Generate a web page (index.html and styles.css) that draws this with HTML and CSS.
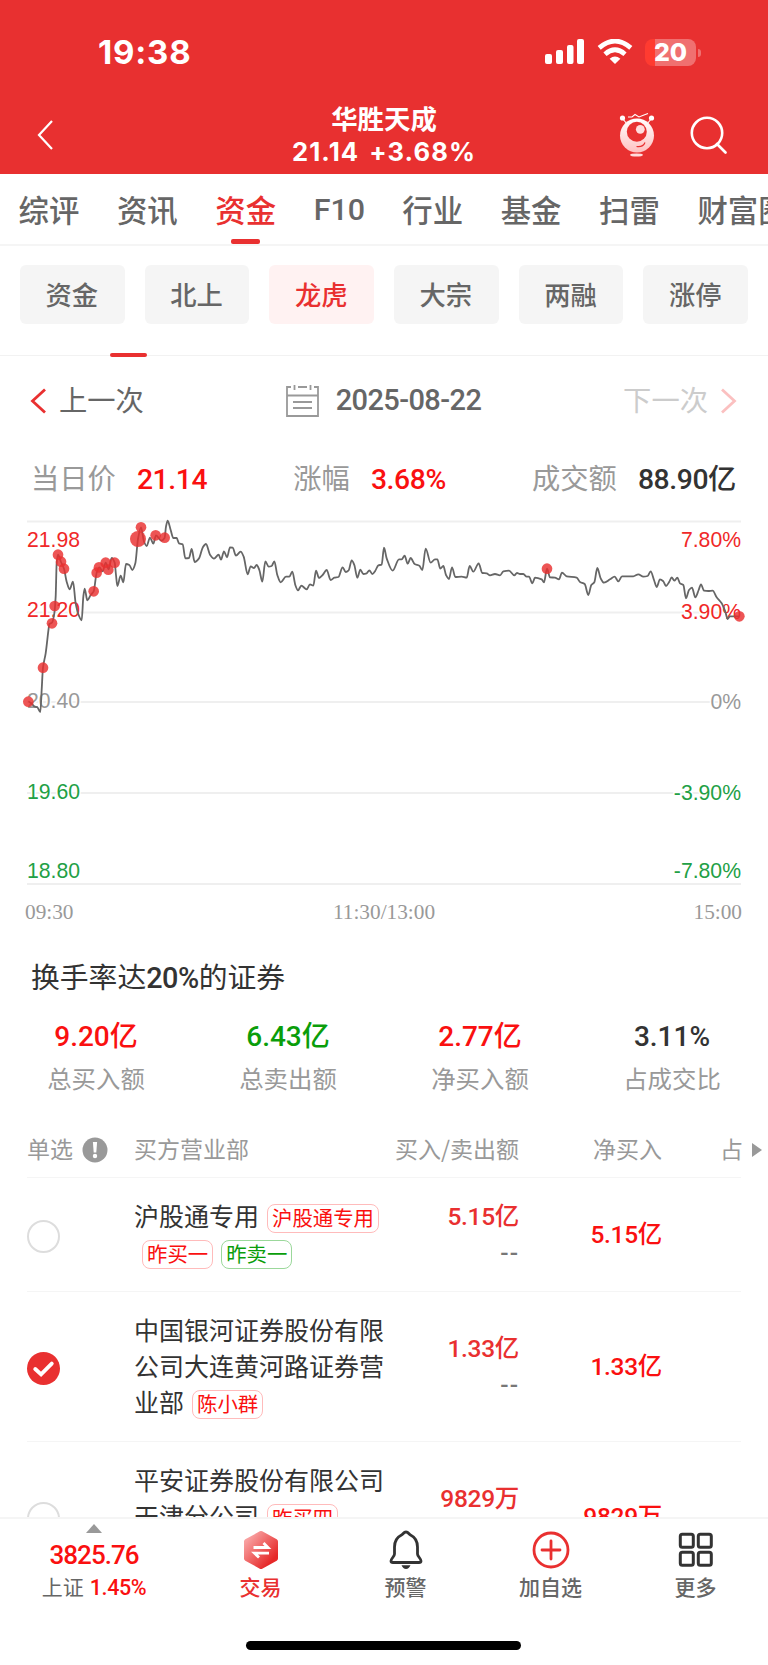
FILE: index.html
```html
<!DOCTYPE html>
<html lang="zh-CN">
<head>
    <meta charset="UTF-8">
    <meta name="viewport" content="width=device-width, initial-scale=1.0">
    <title>华胜天成 - 龙虎榜</title>
    <link rel="stylesheet" href="styles.css">
</head>

<body>
    <div class="app">
        <header>
            <div class="status-bar">
                <span class="time">19:38</span>
                <div class="status-icons">
                    <svg width="40" height="26" viewBox="0 0 40 26" fill="#fff">
                        <rect x="0" y="15" width="7" height="10" rx="2"/>
                        <rect x="11" y="11" width="7" height="14" rx="2"/>
                        <rect x="22" y="6" width="6.5" height="19" rx="2"/>
                        <rect x="32" y="0" width="7" height="25" rx="2"/>
                    </svg>
                    <svg class="wifi" width="36" height="26" viewBox="0 0 36 26" fill="none" stroke="#fff" stroke-width="4.8">
                        <path d="M2.2 8.8 Q18 -4.6 33.8 8.8"/>
                        <path d="M8 15.2 Q18 6.4 28 15.2"/>
                        <path d="M12.6 19.8 Q18 15.4 23.4 19.8 L18 25 Z" fill="#fff" stroke="none"/>
                    </svg>
                    <div class="battery"><span>20</span></div>
                </div>
            </div>
            <div class="nav-bar">
                <svg class="back" width="18" height="32" viewBox="0 0 18 32" fill="none" stroke="#fff" stroke-width="2.2">
                    <path d="M16 2 L3 16 L16 30"/>
                </svg>
                <div class="stock">
                    <h1>华胜天成</h1>
                    <p>21.14<span>+3.68%</span></p>
                </div>
                <div class="nav-icons">
                    <svg width="36" height="46" viewBox="0 0 36 46">
                        <defs>
                            <linearGradient id="robot" x1="0" y1="0" x2="0" y2="1">
                                <stop offset="0" stop-color="#fff"/>
                                <stop offset="1" stop-color="#ffc0c0"/>
                            </linearGradient>
                        </defs>
                        <g fill="none" stroke="#fff" stroke-width="1.1">
                            <path d="M3.5 6.5 L8 12 M32.5 6.5 L28 12"/>
                            <path d="M9 5 L13 5 L16 2.5 L20 5 L25 3 L29 1.5"/>
                        </g>
                        <circle cx="3.5" cy="6" r="2.6" fill="#fff"/>
                        <circle cx="32.5" cy="6" r="2.6" fill="#fff"/>
                        <circle cx="18" cy="23.5" r="17" fill="url(#robot)"/>
                        <circle cx="17.8" cy="19.8" r="10" fill="#e83030"/>
                        <circle cx="21.3" cy="17.3" r="4.4" fill="#ffdcdc"/>
                        <path d="M17.5 34.5 Q24 35.5 26 30.5" fill="none" stroke="#e83030" stroke-width="1.2"/>
                        <ellipse cx="17.5" cy="43" rx="6.5" ry="1.6" fill="#ffdcdc"/>
                    </svg>
                    <svg class="search" width="38" height="38" viewBox="0 0 38 38" fill="none" stroke="#fff" stroke-width="2.6">
                        <circle cx="17" cy="17" r="15.2"/>
                        <path d="M27 28 L35.5 36.5" stroke-linecap="round"/>
                    </svg>
                </div>
            </div>
        </header>

        <nav class="tabs">
            <a>综评</a>
            <a>资讯</a>
            <a class="active">资金</a>
            <a class="f10">F10</a>
            <a>行业</a>
            <a>基金</a>
            <a>扫雷</a>
            <a>财富圈</a>
        </nav>

        <div class="sub-tabs">
            <button>资金</button>
            <button>北上</button>
            <button class="active">龙虎</button>
            <button>大宗</button>
            <button>两融</button>
            <button>涨停</button>
        </div>

        <div class="date-row">
            <div class="prev">
                <svg width="17" height="26" viewBox="0 0 17 26" fill="none" stroke="#e93030" stroke-width="2.8"><path d="M15 1.5 L2.5 13 L15 24.5"/></svg>
                <span>上一次</span>
            </div>
            <div class="date">
                <svg width="33" height="32" viewBox="0 0 33 32" fill="none" stroke="#999" stroke-width="1.8">
                    <path d="M5 2 H1 V31 H32 V2 H28 M12 2 H21 M1 10.5 H32"/>
                    <path d="M8.5 0 V5 M24.5 0 V5"/>
                    <path d="M7 17 H26 M7 23 H26"/>
                </svg>
                <span class="num">2025-08-22</span>
            </div>
            <div class="next">
                <span>下一次</span>
                <svg width="17" height="26" viewBox="0 0 17 26" fill="none" stroke="#fbc0c0" stroke-width="2.8"><path d="M2 1.5 L14.5 13 L2 24.5"/></svg>
            </div>
        </div>

        <div class="quote-row">
            <div>当日价<b class="num red">21.14</b></div>
            <div>涨幅<b class="num red">3.68%</b></div>
            <div>成交额<b class="num">88.90亿</b></div>
        </div>

        <!-- Intraday chart -->
        <svg class="chart" width="768" height="430" viewBox="0 500 768 430">
            <g stroke="#efefef" stroke-width="2">
                <path d="M27 521.5 H741"/>
                <path d="M27 612.5 H741"/>
                <path d="M27 702 H741"/>
                <path d="M27 793 H741"/>
                <path d="M27 884 H741"/>
            </g>
            <g class="labels">
                <text class="up" x="27" y="546.5">21.98</text>
                <text class="up" x="27" y="617">21.20</text>
                <text x="27" y="708">20.40</text>
                <text class="down" x="27" y="799">19.60</text>
                <text class="down" x="27" y="877.5">18.80</text>
            </g>
            <g class="labels right">
                <text class="up" x="741" y="546.5">7.80%</text>
                <text class="up" x="741" y="618.5">3.90%</text>
                <text x="741" y="709">0%</text>
                <text class="down" x="741" y="799.5">-3.90%</text>
                <text class="down" x="741" y="877.5">-7.80%</text>
            </g>
            <g class="axis">
                <text x="25" y="919">09:30</text>
                <text x="384" y="919" text-anchor="middle">11:30/13:00</text>
                <text x="742" y="919" text-anchor="end">15:00</text>
            </g>
            <g transform="translate(0 500) scale(.33333)">
                <path id="line" fill="none" stroke="#666" stroke-width="5.4" stroke-linejoin="round"/>
                <g id="dots" fill="#e93030" fill-opacity=".82"></g>
            </g>
        </svg>

        <h2>换手率达<b class="num">20%</b>的证券</h2>

        <div class="stats">
            <div><b class="num red">9.20亿</b><span>总买入额</span></div>
            <div><b class="num green">6.43亿</b><span>总卖出额</span></div>
            <div><b class="num red">2.77亿</b><span>净买入额</span></div>
            <div><b class="num">3.11%</b><span>占成交比</span></div>
        </div>

        <div class="table">
            <div class="row head">
                <div class="pick">单选
                    <svg width="26" height="26" viewBox="0 0 26 26">
                        <circle cx="13" cy="13" r="12.5" fill="#999"/>
                        <path d="M10.9 5 H15.1 L14.3 15.5 H11.7 Z" fill="#fff"/>
                        <circle cx="13" cy="19" r="2.2" fill="#fff"/>
                    </svg>
                </div>
                <div>买方营业部</div>
                <div class="amount">买入/卖出额</div>
                <div class="net">净买入</div>
                <div class="ratio">占</div>
                <span class="more"></span>
            </div>
            <div class="row">
                <div class="pick"><i class="radio"></i></div>
                <div class="name">沪股通专用<span class="tag">沪股通专用</span> <span class="tag">昨买一</span><span class="tag green">昨卖一</span></div>
                <div class="amount num">5.15亿<span>--</span></div>
                <div class="net num">5.15亿</div>
            </div>
            <div class="row">
                <div class="pick">
                    <svg width="33" height="33" viewBox="0 0 34 34">
                        <circle cx="17" cy="17" r="17" fill="#e93030"/>
                        <path d="M8.5 17.5 L14.5 23 L25.5 12" fill="none" stroke="#fff" stroke-width="4" stroke-linecap="round"/>
                    </svg>
                </div>
                <div class="name">中国银河证券股份有限公司大连黄河路证券营业部<span class="tag">陈小群</span></div>
                <div class="amount num">1.33亿<span>--</span></div>
                <div class="net num">1.33亿</div>
            </div>
            <div class="row tall">
                <div class="pick"><i class="radio"></i></div>
                <div class="name">平安证券股份有限公司天津分公司<span class="tag">昨买四</span></div>
                <div class="amount num">9829万<span>--</span></div>
                <div class="net num">9829万</div>
            </div>
        </div>

        <footer>
            <div class="index">
                <i class="arrow"></i>
                <b class="num red">3825.76</b>
                <span>上证<b class="num red">1.45%</b></span>
            </div>
            <div class="item active">
                <svg width="40" height="40" viewBox="0 0 40 40">
                    <defs>
                        <linearGradient id="trade" x1="0" y1="0" x2="1" y2="1">
                            <stop offset="0.1" stop-color="#f8a0a0"/>
                            <stop offset="0.85" stop-color="#e62828"/>
                        </linearGradient>
                    </defs>
                    <path d="M20 3.5 L34.5 11.5 V28.5 L20 36.5 L5.5 28.5 V11.5 Z" fill="url(#trade)" stroke="url(#trade)" stroke-width="5" stroke-linejoin="round"/>
                    <path d="M12.5 17.5 H27 L22.5 13 M28 23.2 H13.5 L18 27.5" fill="none" stroke="#fff" stroke-width="2.8"/>
                </svg>
                <span>交易</span>
            </div>
            <div class="item">
                <svg width="40" height="40" viewBox="0 0 40 40" fill="none" stroke="#333" stroke-width="2.8" stroke-linejoin="round">
                    <path d="M20 2 C17.5 2 17.5 4 15.5 5 C10.5 7.5 8.5 11.5 8.5 17 V24 C8.5 26.5 5 28.5 5 31 Q5 32.5 7 32.5 H33 Q35 32.5 35 31 C35 28.5 31.5 26.5 31.5 24 V17 C31.5 11.5 29.5 7.5 24.5 5 C22.5 4 22.5 2 20 2 Z"/>
                    <path d="M15.5 35.3 H24.5 Q23 39 20 39 T15.5 35.3 Z" fill="#333" stroke="none"/>
                </svg>
                <span>预警</span>
            </div>
            <div class="item">
                <svg width="40" height="40" viewBox="0 0 40 40" fill="none" stroke="#e93030" stroke-width="2.8" stroke-linecap="round">
                    <circle cx="20" cy="20" r="17"/>
                    <path d="M20 11 V29 M11 20 H29"/>
                </svg>
                <span>加自选</span>
            </div>
            <div class="item">
                <svg width="40" height="40" viewBox="0 0 40 40" fill="none" stroke="#333" stroke-width="3">
                    <rect x="4.3" y="4.3" width="13" height="13" rx="2"/>
                    <rect x="22.3" y="4.3" width="13" height="13" rx="2"/>
                    <rect x="4.3" y="22.3" width="13" height="13" rx="2"/>
                    <rect x="22.3" y="22.3" width="13" height="13" rx="2"/>
                </svg>
                <span>更多</span>
            </div>
            <div class="home-bar"></div>
        </footer>
    </div>

    <script>
        // x,y pairs in thirds of a pixel
        const points = [
            85,605, 96,612, 103,619, 112,622, 121,636, 125,570, 129,503, 137,460, 146,385, 148,372, 156,368,
            163,340, 167,290, 170,190, 174,164, 183,186, 192,206, 200,245, 209,268, 219,245, 227,310, 236,345,
            245,361, 250,290, 254,266, 262,301, 272,285, 281,274, 290,218, 298,202, 308,214, 317,188, 326,208,
            335,174, 344,188, 348,225, 352,258, 362,227, 370,247, 378,192, 388,195, 397,210, 406,190, 414,117,
            423,82, 432,125, 440,138, 450,113, 460,131, 468,106, 484,122, 494,113, 498,80, 503,62, 512,90,
            520,114, 530,114, 537,130, 548,133, 556,175, 567,174, 575,147, 584,186, 597,175, 608,143, 618,132,
            630,164, 642,176, 656,164, 663,179, 672,154, 681,172, 690,142, 698,143, 708,167, 722,155, 731,170,
            743,223, 752,199, 762,204, 770,195, 778,210, 787,245, 796,184, 806,200, 815,198, 823,184, 832,225,
            842,247, 858,230, 868,230, 877,215, 886,255, 894,271, 904,257, 920,268, 930,253, 940,257, 948,212,
            957,234, 968,225, 980,210, 992,240, 1003,233, 1015,231, 1028,202, 1037,216, 1046,211, 1055,181,
            1063,195, 1072,233, 1081,209, 1090,222, 1100,220, 1108,211, 1117,222, 1126,212, 1135,196, 1145,194,
            1152,143, 1160,175, 1178,212, 1197,178, 1205,178, 1214,167, 1223,191, 1232,174, 1244,192, 1258,197,
            1267,210, 1277,146, 1292,188, 1305,178, 1312,178, 1321,206, 1330,198, 1338,225, 1347,237, 1356,202,
            1366,231, 1385,230, 1400,233, 1409,198, 1420,215, 1436,190, 1447,219, 1460,220, 1470,226, 1485,222,
            1500,226, 1510,214, 1527,212, 1543,226, 1551,219, 1560,222, 1570,222, 1580,230, 1587,230, 1597,250,
            1605,233, 1625,238, 1632,247, 1641,206, 1650,232, 1665,233, 1677,238, 1686,218, 1700,229, 1730,233,
            1740,246, 1754,252, 1765,285, 1774,255, 1783,247, 1792,204, 1802,235, 1812,248, 1830,238, 1844,230,
            1855,244, 1866,229, 1900,229, 1915,223, 1930,230, 1943,228, 1952,214, 1962,240, 1970,261, 1980,238,
            1990,244, 1998,258, 2008,245, 2015,232, 2023,242, 2032,233, 2040,250, 2050,255, 2058,295, 2067,270,
            2076,263, 2086,292, 2096,270, 2103,253, 2112,272, 2125,273, 2138,272, 2150,292, 2165,310, 2176,335,
            2183,357, 2190,349, 2218,349
        ];

        const dots = [
            [85, 605], [129, 503], [156, 370], [164, 318], [174, 164], [183, 185], [192, 206], [281, 274],
            [290, 218], [297, 202], [317, 188], [325, 209], [344, 188], [414, 117, 24], [423, 82], [467, 106],
            [494, 113], [1641, 206], [2218, 349]
        ];

        const pts = [];
        for (let i = 0; i < points.length; i += 2) {
            pts.push([points[i], points[i + 1]]);
        }

        // flat tangent on every peak and dip, so the curve never overshoots
        function slope(i) {
            if (i === 0 || i === pts.length - 1) return 0;
            const a = (pts[i][1] - pts[i - 1][1]) / (pts[i][0] - pts[i - 1][0]);
            const b = (pts[i + 1][1] - pts[i][1]) / (pts[i + 1][0] - pts[i][0]);
            return a * b <= 0 ? 0 : 2 * a * b / (a + b);
        }

        let d = `M${pts[0]}`;
        for (let i = 1; i < pts.length; i++) {
            const [x0, y0] = pts[i - 1];
            const [x1, y1] = pts[i];
            const dx = (x1 - x0) / 3;
            d += `C${x0 + dx},${y0 + slope(i - 1) * dx} ${x1 - dx},${y1 - slope(i) * dx} ${x1},${y1}`;
        }
        document.getElementById('line').setAttribute('d', d);
        document.getElementById('dots').innerHTML = dots
            .map(([x, y, r]) => `<circle cx="${x}" cy="${y}" r="${r || 16}"/>`)
            .join('');
    </script>
</body>
</html>
```

FILE: styles.css
```css
* {
    box-sizing: border-box;
}

body, html {
    margin: 0;
    padding: 0;
    font-family: "Noto Sans CJK SC", sans-serif;
    background-color: #fff;
    color: #333;
}

h1, h2, p {
    margin: 0;
}

svg {
    display: block;
    flex-shrink: 0;
}

.app {
    width: 768px;
    height: 1665px;
    display: flex;
    flex-direction: column;
    overflow: hidden;
}

.num {
    font-family: Roboto, "Noto Sans CJK SC", sans-serif;
    font-weight: 500;
}

.red {
    color: #fa1010;
}

.green {
    color: #0a9d0a;
}

header {
    height: 174px;
    flex-shrink: 0;
    background-color: #e83030;
    color: #fff;
}

.status-bar {
    height: 104px;
    padding: 0 67px 0 98px;
    display: flex;
    justify-content: space-between;
    align-items: center;
}

.time {
    font-family: Inter, sans-serif;
    font-weight: 700;
    font-size: 33px;
    letter-spacing: 0.8px;
}

.status-icons {
    display: flex;
    align-items: center;
}

.wifi {
    margin: 0 12px;
}

.battery {
    position: relative;
    width: 51px;
    height: 27px;
    margin-right: 5px;
    border-radius: 8px;
    background: linear-gradient(to right, #ff3b30 10px, #f07070 10px);
    font: 800 25px/27px Inter, sans-serif;
    text-align: center;
}

.battery::after {
    content: "";
    position: absolute;
    left: 53px;
    top: 10px;
    width: 3px;
    height: 8px;
    border-radius: 0 4px 4px 0;
    background-color: #f07070;
}

.nav-bar {
    height: 70px;
    display: grid;
    grid-template-columns: 150px 1fr 150px;
}

.back {
    margin: 15px 0 0 36px;
}

.stock {
    text-align: center;
}

.stock h1 {
    margin-top: -2px;
    font-size: 26.4px;
    line-height: 32px;
    font-weight: 700;
}

.stock p {
    margin-top: 2px;
    font: 700 25.6px/32px Inter, sans-serif;
    letter-spacing: 1.1px;
}

.stock p span {
    margin-left: 10px;
}

.nav-icons {
    display: flex;
    align-items: flex-start;
    gap: 35px;
    padding: 8px 0 0 1px;
}

.search {
    margin-top: 4px;
}

.tabs {
    height: 72px;
    flex-shrink: 0;
    display: flex;
    gap: 37.6px;
    padding-left: 18.5px;
    border-bottom: 2px solid #f5f5f5;
    font-size: 30.4px;
    line-height: 71px;
    font-weight: 500;
    color: #666;
    white-space: nowrap;
    overflow: hidden;
}

.tabs .f10 {
    width: 51px;
    font-family: Roboto, sans-serif;
    line-height: 72px;
}

.tabs .active {
    position: relative;
    color: #e93030;
}

.tabs .active::after {
    content: "";
    position: absolute;
    left: 16px;
    bottom: 0;
    width: 29px;
    height: 5px;
    border-radius: 2px;
    background-color: #e93030;
}

.sub-tabs {
    position: relative;
    height: 110px;
    flex-shrink: 0;
    display: flex;
    gap: 20px;
    padding: 19px 20px 0;
    border-bottom: 1px solid #f2f2f2;
}

.sub-tabs::after {
    content: "";
    position: absolute;
    left: 110px;
    bottom: -2px;
    width: 37px;
    height: 4px;
    border-radius: 2px;
    background-color: #e93030;
}

.sub-tabs button {
    flex: 1;
    height: 59px;
    padding: 0 1px 2px 0;
    border: none;
    border-radius: 6px;
    background-color: #f5f5f5;
    font: 500 26.3px/57px "Noto Sans CJK SC", sans-serif;
    color: #666;
}

.sub-tabs .active {
    background-color: #fff2f2;
    color: #e93030;
}

.date-row {
    height: 89px;
    flex-shrink: 0;
    display: flex;
    justify-content: space-between;
    align-items: center;
    padding: 0 31px 0 30px;
    font-size: 28.3px;
    color: #666;
}

.date-row span {
    margin-top: -5px;
}

.prev, .date, .next {
    display: flex;
    align-items: center;
    gap: 12px;
}

.date {
    gap: 17px;
}

.date .num {
    margin-top: -1px;
    font-size: 29px;
    letter-spacing: -0.6px;
}

.next {
    color: #ccc;
}

.quote-row {
    height: 69px;
    flex-shrink: 0;
    display: flex;
    justify-content: space-between;
    padding: 0 32px 0 31px;
    font-size: 28.3px;
    line-height: 64px;
    color: #999;
}

.quote-row .num {
    margin-left: 21px;
    letter-spacing: -0.4px;
    color: #333;
}

.quote-row .red {
    color: #fa1010;
}

.chart {
    margin-top: -14px;
}

.labels text {
    font: 21.2px "Liberation Sans", sans-serif;
    fill: #999;
    stroke: #fff;
    stroke-width: 3px;
    paint-order: stroke;
}

.labels .up {
    fill: #f02828;
}

.labels .down {
    fill: #22a045;
}

.right {
    text-anchor: end;
}

.axis text {
    font: 21.3px "Liberation Serif", serif;
    fill: #999;
}

h2 {
    height: 62px;
    flex-shrink: 0;
    padding: 16px 31px 0;
    font-size: 28.8px;
    line-height: 60px;
    font-weight: 400;
}

h2 .num {
    letter-spacing: -0.5px;
}

.stats {
    height: 132px;
    flex-shrink: 0;
    display: grid;
    grid-template-columns: repeat(4, 1fr);
    padding-top: 23px;
    text-align: center;
}

.stats .num {
    display: block;
    font-size: 28px;
    line-height: 44px;
}

.stats span {
    display: block;
    font-size: 24.4px;
    line-height: 38px;
    color: #999;
}

.table {
    height: 393px;
    flex-shrink: 0;
    padding-left: 27px;
    overflow: hidden;
}

.row {
    position: relative;
    width: 714px;
    height: 114px;
    display: grid;
    grid-template-columns: 107px 265px 120px 143px 79px;
    align-items: center;
    border-bottom: 1px solid #f5f5f5;
    font-size: 25px;
    line-height: 36px;
}

.row:nth-child(n+3) {
    height: 150px;
}

.row.head {
    height: 54px;
    padding-bottom: 6px;
    font-size: 23px;
    color: #999;
}

.row.head .amount {
    margin-left: -10px;
}

.row.head .ratio {
    margin-right: -2px;
}

.pick {
    display: flex;
    align-items: center;
    gap: 9px;
    padding-top: 4px;
}

.head .pick {
    padding-top: 0;
}

.head svg {
    margin-top: 4px;
}

.radio {
    width: 33px;
    height: 33px;
    border: 2px solid #ddd;
    border-radius: 50%;
}

.name {
    width: 252px;
    padding-bottom: 3px;
}

.row.tall .name {
    height: 111px;
}

.amount, .net, .ratio {
    text-align: right;
    white-space: nowrap;
}

.amount.num, .net.num {
    color: #e93030;
    font-size: 24.5px;
    letter-spacing: -0.3px;
}

.net.num {
    color: #fa1010;
}

.amount span {
    display: block;
    letter-spacing: 1px;
    color: #777;
}

.more {
    position: absolute;
    left: 725px;
    top: 19px;
    border: 7px solid transparent;
    border-left: 10px solid #999;
    border-right: 0;
}

.tag {
    display: inline-block;
    height: 29px;
    margin: 7px 0 0 8px;
    padding: 0 4px;
    border: 1px solid #fbb;
    border-radius: 8px;
    font-size: 20.4px;
    line-height: 25px;
    vertical-align: top;
    color: #fa1010;
}

.tag.green {
    border-color: #9bd89b;
    color: #0a9d0a;
}

footer {
    position: relative;
    height: 148px;
    flex-shrink: 0;
    display: grid;
    grid-template-columns: 188px repeat(4, 145px);
    border-top: 2px solid #f5f5f5;
    background-color: #fff;
    font-size: 21px;
    font-weight: 500;
    text-align: center;
    color: #666;
}

.index {
    display: flex;
    flex-direction: column;
    align-items: center;
    padding-top: 5px;
    font-weight: 400;
}

.arrow {
    border: 8px solid transparent;
    border-top: 0;
    border-bottom: 9px solid #999;
}

.index > .num {
    margin-top: 4px;
    font-size: 26px;
    line-height: 36px;
    letter-spacing: -1px;
}

.index span {
    line-height: 26px;
}

.index span .num {
    margin-left: 6px;
    font-size: 21.5px;
    letter-spacing: -0.4px;
}

.item svg {
    margin: 11px auto 0;
}

.item span {
    display: block;
    line-height: 32px;
}

.item.active {
    color: #e93030;
}

.home-bar {
    position: absolute;
    left: 246px;
    bottom: 15px;
    width: 275px;
    height: 9px;
    border-radius: 5px;
    background-color: #000;
}
```
